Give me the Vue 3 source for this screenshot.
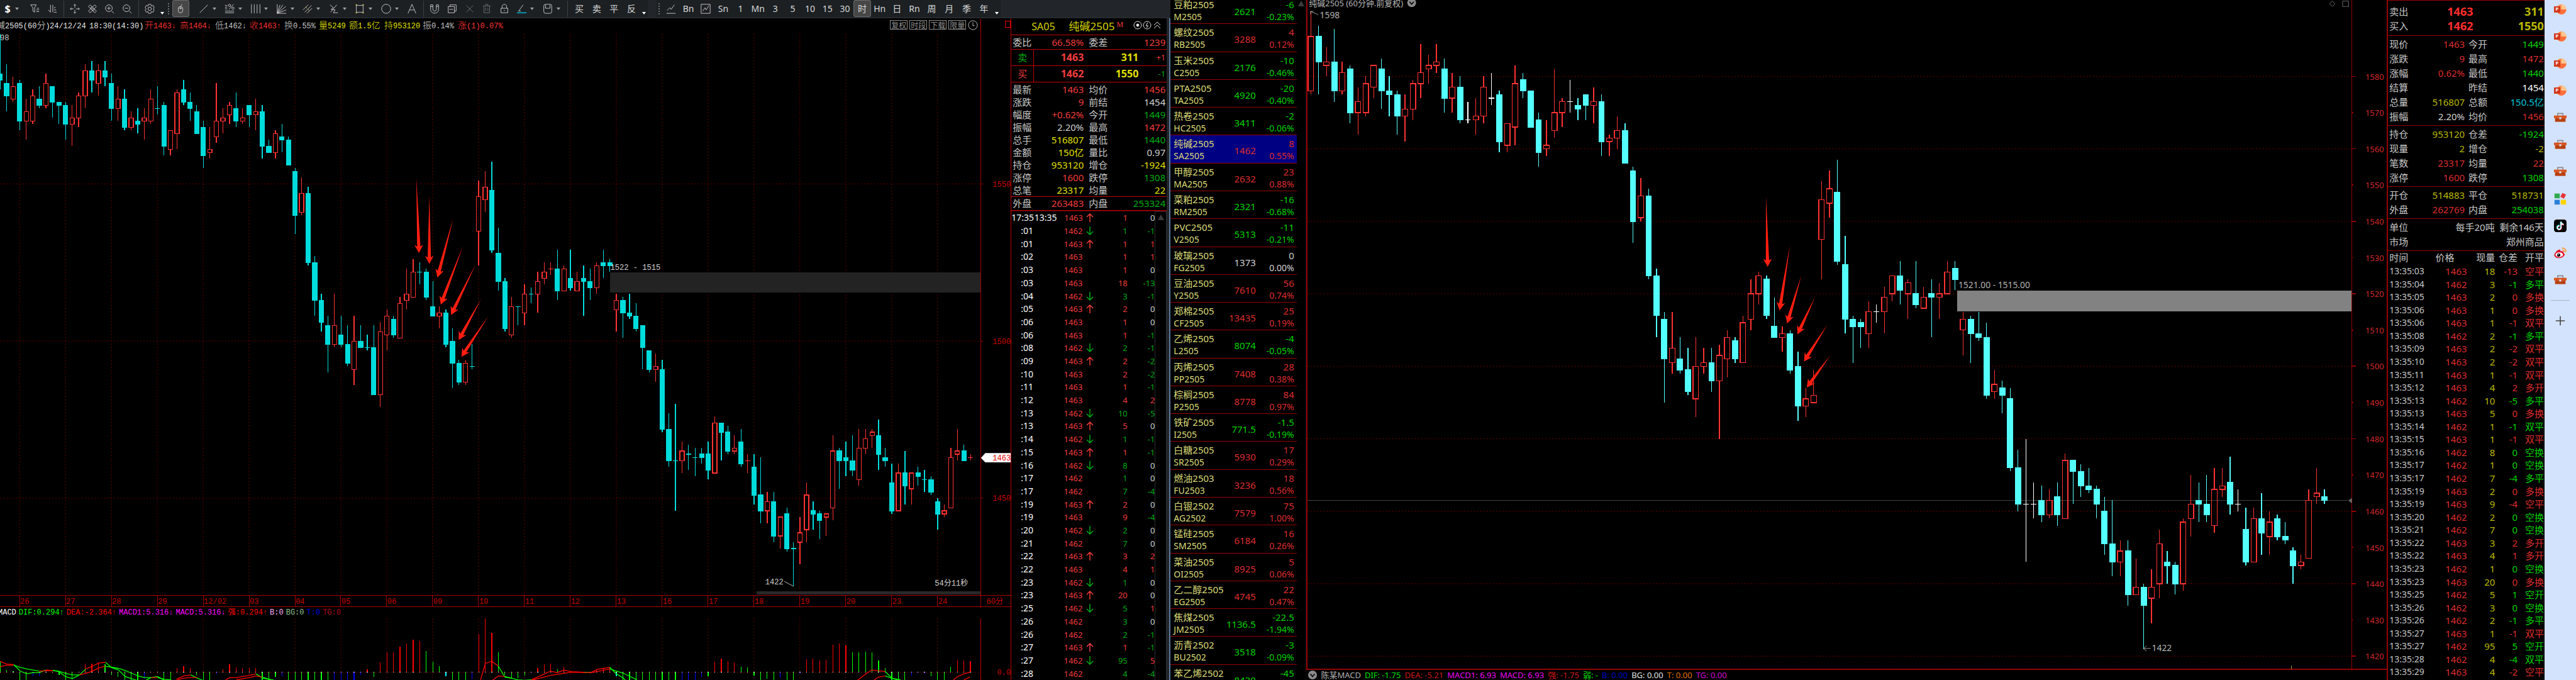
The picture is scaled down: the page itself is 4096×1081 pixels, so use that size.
<script setup>
// Candle rows: kind, then high / body top / body bottom / low as ticks below a reference price.
const parse = (src) => src.trim().split(/\s+/).map((c) => {
  const [h, t, b, l] = c.slice(1).split(',').map(Number)
  return { k: c[0], h, t, b, l }
})

const leftRaw = parse(`
d-5,8,10,13 d5,11,15,20 u9,12,16,17 d10,11,23,26 u16,20,23,29 u13,15,23,24 d12,16,18,19 u8,11,18,19 d12,12,17,22 d17,17,18,24
d17,18,24,29 u18,22,24,31 u14,15,22,25 u5,7,15,19 d4,7,10,14 u5,7,11,15 d4,7,9,12 d8,11,19,23 u12,16,19,23 d13,16,25,26
u20,22,25,26 d19,23,24,27 u19,22,23,29 u13,16,23,24 d12,19,19,21 d17,18,31,34 u26,26,32,34 u13,14,27,32 d10,13,17,18 d14,17,19,23
d18,20,27,27 d23,25,34,38 u25,32,33,35 u11,23,28,30 u19,22,23,27 u17,18,21,24 d14,19,23,25 u19,22,23,24 d18,18,21,25 u16,20,21,26
d18,20,31,35 d29,31,33,33 u26,27,33,35 d24,28,29,33 d28,29,37,37 d38,39,53,59 u41,46,52,53 d44,46,68,69 d66,68,80,85 d78,80,87,90
d85,88,94,103 u78,88,94,95 d85,91,94,95 d88,94,100,101 u85,93,102,107 d88,93,95,95 d91,95,95,96 d88,95,110,110 u87,90,110,114 u83,85,91,96
d85,86,91,92 u79,81,92,92 u70,78,80,83 u67,71,79,79 d68,71,71,75 d70,71,79,80 d74,82,85,85 u82,84,85,89 d83,84,94,95 d89,93,100,108
d99,100,106,107 u99,100,106,107 d94,101,101,102 u42,47,58,69 u39,44,48,52 d36,45,64,65 d57,65,74,77 d73,74,89,90 u79,82,91,92 d82,82,82,88
u75,78,84,88 d76,78,78,81 u71,74,78,84 u68,71,73,75 u68,70,70,72 d64,70,77,80 u69,70,77,77 d64,73,76,77 u71,74,77,77 d69,73,74,85
d70,74,76,80 u68,69,76,78 d64,68,69,73 d67,68,69,71 u78,80,83,90 d79,80,84,92 d78,84,85,86 d81,85,89,90 d88,88,95,102 d96,96,102,103
u97,101,102,106 d99,102,121,122 d116,121,131,133 d113,131,131,147 u125,128,131,135 d126,129,129,134 d127,130,130,136 d127,129,130,132 d125,129,134,137 u117,119,135,135
d119,119,122,131 d120,122,128,129 u123,127,128,129 d121,125,132,133 u129,131,131,135 d129,133,142,145 d130,142,147,151 u141,144,147,151 d141,144,155,157 u149,149,155,159
d146,148,159,160 d157,159,159,171 u149,154,157,164 u138,142,153,157 d144,147,148,153 d147,148,150,156 u148,148,149,155 u123,128,146,150 d127,128,131,140 d125,130,131,136
d123,131,134,136 u121,127,137,139 u121,124,127,129 u121,122,123,127 d118,123,129,134 d127,130,131,133 d132,138,147,148 u132,135,147,147 d128,135,139,145 u135,135,140,145
d133,135,136,139 d134,137,137,141 d136,137,141,142 d143,144,148,153 u145,147,148,149 u127,130,146,146 u121,128,129,131 d126,128,131,131 u129,130,130,131`)

const rightRaw = parse(`
u2,9,24,25 d6,9,16,25 u12,16,17,20 d7,16,24,27 u16,19,24,25 d17,18,30,33 u23,27,30,36 u20,22,30,31 u17,17,23,26 d15,18,24,29
d20,24,25,31 d24,25,31,36 u25,29,31,38 u21,22,29,32 u11,19,22,26 u14,17,18,22 u11,16,17,19 d15,18,26,30 u19,23,26,30 d20,23,32,33
w27,32,32,33 u26,31,32,36 u20,23,31,33 w19,26,26,28 d24,25,38,41 u33,33,39,41 u17,22,34,39 d19,21,24,26 d24,24,34,34 d30,32,41,45
u32,39,40,42 u18,30,35,37 u26,27,30,34 w21,27,27,30 d26,28,29,32 d25,25,28,32 u23,27,28,33 d25,27,38,42 u36,37,38,42 u31,35,37,40
d33,35,44,44 d45,46,60,66 u48,53,59,60 d51,53,75,76 d73,75,86,92 d85,87,98,110 u85,95,99,102 d92,98,101,102 d95,101,107,108 u92,100,109,114
u95,99,100,102 d95,99,104,107 u94,97,104,120 u90,92,98,103 d92,93,98,99 u86,88,99,99 u76,80,87,90 u74,75,80,83 d75,76,86,87 d81,89,92,92
u89,91,92,96 d90,91,101,102 d96,100,111,115 u106,109,111,114 u101,108,110,110 u49,54,65,76 u46,51,55,59 d43,52,71,72 d64,72,87,91 d86,87,89,99
d87,88,89,95 u82,85,91,95 w83,85,85,88 u78,81,85,91 u75,75,80,82 d71,75,79,83 u76,77,80,87 d71,80,83,84 u78,81,84,84 d76,80,81,92
u77,80,81,87 u71,74,80,80 d71,73,76,79 u85,87,90,97 d86,87,91,99 d85,91,92,93 d88,92,108,109 u101,105,107,109 d104,106,108,113 d106,109,128,129
d123,128,138,140 w120,138,138,154 w132,138,138,142 d133,137,141,143 u134,137,141,142 d132,136,141,144 u124,126,142,142 d126,126,129,138 d127,129,133,136 d128,133,134,135
d133,134,138,142 d136,140,149,152 d137,149,154,158 u148,151,154,158 d148,151,163,166 u153,161,163,163 d160,161,166,178 u156,161,164,171 u145,149,160,164 d151,154,155,160
d154,155,160,163 u142,143,160,162 u130,138,142,147 d132,137,138,143 d130,138,141,143 u128,134,144,146 u128,133,134,136 d125,132,138,141 w134,138,138,140 d139,145,154,155
u139,142,154,154 d135,142,146,152 u140,143,147,152 d141,142,147,148 d143,147,148,149 d150,151,155,160 u152,154,155,156 u134,137,153,153 u128,135,136,138 d134,136,137,138`)

const place = (rows, x0, step, y0, tick) => rows.map((c, i) => {
  const y = (n) => Math.round((y0 + n * tick) * 10) / 10
  return { k: c.k, x: Math.round((x0 + i * step) * 10) / 10, h: y(c.h), t: y(c.t), b: y(c.b), l: y(c.l), flat: c.t === c.b }
})
const leftY = (p) => 627 + (1500 - p) * 5.784
const rightY = (p) => 540.5 + (1520 - p) * 6.667
const leftCandles = place(leftRaw, 0, 12.066, leftY(1593), 5.784)
const rightCandles = place(rightRaw, 8.3, 14.46, rightY(1600), 6.667)

const dates = ['26', '27', '28', '29', '12/02', '03', '04', '05', '06', '09', '10', '11', '12', '13', '16', '17', '18', '19', '20', '23', '24']
  .map((t, i) => ({ t, x: 36 + i * 84.46 }))
const rightLabels = Array.from({ length: 17 }, (_, i) => 1580 - i * 10)

// Tapered annotation arrow from a tail point to a tip.
const arrow = ([x1, y1, x2, y2]) => {
  const len = Math.hypot(x2 - x1, y2 - y1)
  const ux = (x2 - x1) / len, uy = (y2 - y1) / len
  const p = (back, side) => `${(x2 - ux * back - uy * side).toFixed(1)},${(y2 - uy * back + ux * side).toFixed(1)}`
  return [p(len, 0), p(12, 3), p(15, 8), p(0, 0), p(15, -8), p(12, -3)].join(' ')
}
const leftArrows = [[766, 326, 771, 465], [790, 359, 790, 485], [834, 401, 805, 510], [852, 452, 811, 560], [875, 486, 830, 579], [885, 550, 844, 625], [898, 582, 849, 656]].map(arrow)
const rightArrows = [[846, 361, 849, 491], [890, 451, 871, 571], [911, 507, 885, 595], [936, 547, 904, 615], [959, 597, 916, 665], [964, 654, 921, 713]].map(arrow)

// Histogram: colour letter and signed height per candle.
const hist = `g20 g4 g2 g-15 g-15 b-8 b-7 g0 c-1 g-5 g-15 g-13 b-1 r16 r16 r18 g14 g-5 g-9 g-15 g-15 g-15 b-12 b-1 g0 g-15 g-14 r7 r11 r8
g-5 g-15 g-15 b-4 r5 r14 r9 r8 r8 r8 g-15 g-15 g-9 b-7 g-15 g-15 g-15 g-15 g-15 g-15 g-15 b-15 b-15 b-15 b-15 b-5 r5 g-9 r18 r37
r36 r47 r53 r60 r57 g39 g19 g11 c-8 g-15 g-15 g-15 b-12 r70 r100 r72 g37 g-5 g-11 g-11 g-6 b-2 r7 r14 r16 g5 r10 g-1 r0 g0
g-1 r5 r7 r10 c-8 g-15 g-15 g-15 g-15 g-15 g-15 g-15 g-15 g-15 b-15 b-15 b-15 b-9 g-8 r19 r25 r20 r18 g10 g9 g-6 g-15 g-12 g-15 b-10
g-15 g-15 b-2 r24 r25 r22 r23 r50 r53 r49 g37 g37 g38 g36 g21 g8 g-15 g-15 g-15 b-6 b-2 b-2 g-8 g-15 g-15 g10 r23 r22 r20`
  .trim().split(/\s+/).map((s, i) => ({ k: s[0], x: (i * 12.066).toFixed(1), v: Number(s.slice(1)) }))

const curves = [
  ['r', '0,1216 12,1221 25,1222'], ['g', '25,1222 37,1234 49,1239 60,1237 72,1237 84,1232'], ['r', '84,1232 97,1233'],
  ['g', '97,1233 108,1235 120,1244 133,1248 146,1241 158,1230'], ['r', '158,1230 170,1225 182,1219 194,1218'],
  ['g', '194,1218 206,1228 218,1232 230,1244 242,1248 252,1251'], ['g', '268,1251 278,1246 290,1244 302,1251'],
  ['r', '0,1226 12,1223 25,1223'], ['g', '25,1223 37,1227 49,1230 72,1234'], ['r', '72,1234 97,1233'],
  ['g', '97,1233 108,1234 120,1238 133,1241 146,1241'], ['r', '146,1241 158,1238 170,1234 182,1228 194,1225'],
  ['g', '194,1225 206,1227 218,1229 230,1233 242,1238 254,1243 266,1246 278,1246'], ['r', '278,1246 290,1246'],
  ['g', '290,1246 302,1249 314,1250'], ['r', '324,1249 338,1243 351,1241'], ['g', '351,1241 363,1247 373,1251'],
  ['r', '326,1250 338,1247 351,1246 363,1246'], ['r', '415,1250 423,1246 435,1246 447,1244 459,1242 471,1239'],
  ['g', '471,1239 483,1247 504,1251'], ['r', '435,1250 459,1246 471,1243 483,1245'], ['g', '483,1245 495,1249 504,1251'],
  ['r', '884,1251 893,1220 905,1216 917,1225'], ['g', '917,1225 929,1245 941,1247 953,1250 965,1251 978,1250'],
  ['r', '906,1251 917,1243 929,1244'], ['g', '929,1244 941,1247'],
  ['r', '978,1250 998,1241 1013,1234 1025,1237 1038,1232 1050,1235 1074,1236'], ['g', '1074,1236 1087,1237'],
  ['r', '1087,1237 1099,1231 1111,1229 1122,1227'], ['g', '1122,1227 1134,1239 1147,1247 1151,1251'],
  ['r', '978,1251 1013,1242 1038,1238 1050,1236 1087,1237 1099,1235 1122,1230'], ['g', '1122,1230 1147,1238 1172,1250'],
  ['r', '1578,1251 1592,1240 1604,1232 1629,1235'], ['g', '1629,1235 1641,1247 1653,1251'],
  ['r', '1608,1251 1616,1245 1629,1243'], ['g', '1629,1243 1641,1247 1657,1250'],
  ['r', '1754,1251 1762,1244 1774,1239 1785,1236'], ['r', '1774,1250 1785,1245'],
]
const tone = { r: '#ff0000', g: '#00ff00', b: '#0000ff', c: '#00ffff' }

// Toolbar slots carry their relative width.
const dd = { dd: 1, w: 16 }, sep = { sep: 1, w: 10 }
const ic = (icon, name, w = 32) => ({ icon, name, w })
const tools = [
  { t: '$', w: 28, bold: 1 }, { dd: 1, w: 20 }, ic('filter', '筛选'), ic('sort', '排序'), sep,
  ic('move', '移动'), ic('ruler', '测量'), ic('zin', '放大'), ic('zout', '缩小'), sep, ic('gear', '设置'), { low: 1, w: 13 }, { grip: 1, w: 12 },
  { icon: 'mouse', name: '鼠标', w: 32, on: 1 }, { w: 10 }, ic('line', '直线'), dd, ic('pct', '百分比'), dd, ic('vlines', '周期线'), dd, ic('fan', '扇形线'), dd,
  ic('par', '平行线'), dd, ic('wave', '波浪'), dd, ic('rect', '矩形'), dd, ic('circle', '圆'), dd, ic('letter', '文字'), sep,
  ic('magnet', '磁吸'), ic('copy', '复制'), { icon: 'cross', name: '关闭', w: 32, dim: 1 }, { icon: 'trash', name: '删除', w: 32, dim: 1 }, ic('lock', '锁定'), ic('pen', '画笔颜色'), dd, ic('eraser', '样式'), dd, sep,
  { t: '买', w: 32 }, { t: '卖', w: 32 }, { t: '平', w: 32 }, { t: '反', w: 32 }, { low: 1, w: 14 },
]
const periods = [
  { grip: 1, w: 11 }, ic('trend', '分时'), { t: 'Bn', w: 32 }, ic('trendbox', '走势'),
  ...['Sn', '1', 'Mn', '3', '5', '10', '15', '30', '时', 'Hn', '日', 'Rn', '周', '月', '季', '年'].map((t) => ({ t, w: 32, on: t === '时' })),
  { low: 1, w: 15 },
]
const icons = {
  filter: '<path d="M3 3H13L10 8V16L7 14V8Z M14 9H18 M13 12H18 M13 15H18"/>',
  sort: '<path d="M7 3V16L3 12 M11 16V3 M13 8H16 M13 12H17 M13 16H18"/>',
  move: '<path d="M10 2V8M10 12V18M2 10H8M12 10H18M8 4L10 2L12 4M8 16L10 18L12 16M4 8L2 10L4 12M16 8L18 10L16 12"/>',
  ruler: '<path d="M3 6L6 3L17 14L14 17Z M14 3L17 6L6 17L3 14Z M6 9L9 6 M11 14L14 11 M8 11L12 9"/>',
  zin: '<circle cx="9" cy="9" r="6"/><path d="M14 14L18 18M6 9H12M9 6V12"/>',
  zout: '<circle cx="9" cy="9" r="6"/><path d="M14 14L18 18M6 9H12"/>',
  gear: '<path d="M8 2H12L13 5L16 4L18 8L16 10L18 12L16 16L13 15L12 18H8L7 15L4 16L2 12L4 10L2 8L4 4L7 5Z"/><circle cx="10" cy="10" r="3"/>',
  mouse: '<rect x="6" y="6" width="8" height="11" rx="4"/><path d="M10 6V11M7 9H13M10 6C10 4 13 5 12 2"/>',
  line: '<path d="M3 17L17 3"/>',
  pct: '<path d="M2 4H6M2 7H6M2 10H6M2 14H18M2 17H18M17 2L9 11"/><circle cx="10" cy="4" r="2"/><circle cx="16" cy="9" r="2"/>',
  vlines: '<path d="M2 2V18M7 2V18M12 2V18M17 2V18"/>',
  fan: '<path d="M2 2V18H18M2 18L7 3M2 18L12 3M2 18L17 6M2 18L18 12"/>',
  par: '<path d="M2 12L11 3M5 16L17 4M9 18L18 9"/><path stroke="#e6e65a" d="M7 7L9 9M11 11L13 13"/>',
  wave: '<path d="M3 3L9 8L5 11L12 12L9 17L17 17M15 3L4 16"/>',
  rect: '<path d="M4 4H16V16H4Z"/><path stroke="#e6e65a" stroke-width="2" d="M3 3H5M15 3H17M3 17H5M15 17H17"/>',
  circle: '<circle cx="10" cy="10" r="8"/>',
  letter: '<path d="M3 18L10 2L17 18M6 12H14"/>',
  magnet: '<path d="M3 3H7V11C7 15 13 15 13 11V3H17V11C17 20 3 20 3 11ZM3 6H7M13 6H17"/>',
  copy: '<path d="M6 6V3H17V14H14M3 6H14V17H3ZM5 11H12"/>',
  cross: '<path d="M4 4L16 16M16 4L4 16"/>',
  trash: '<path d="M3 5H17M5 5V17H15V5M8 5V2H12V5M8 8V14M12 8V14"/>',
  lock: '<path d="M4 9H16V17H4ZM6 9V6C6 1 14 1 14 6V9M10 12V14"/>',
  pen: '<path d="M12 3L4 14H8"/><path stroke="#00a0c0" stroke-width="2" d="M1 17H18"/>',
  eraser: '<rect x="3" y="2" width="14" height="16" rx="3"/><path d="M6 3V9H14V3"/>',
  trend: '<path d="M2 18H18M3 13L8 8L10 11L16 3"/>',
  trendbox: '<path d="M2 2H18V18H2ZM5 14L9 8L11 12L16 4"/>',
}

const info = [
  ['碱', '2505(60', '分', ')', '#e8e8e8'], ['', '24/12/24', '', '', '#e8e8e8'], ['', '18:30(14:30)', '', '', '#e8e8e8'],
  ['开', '1463', '', '↓', '#ff3434'], ['高', '1464', '', '↓', '#ff3434'], ['低', '1462', '', '↓', '#c8c8c8'], ['收', '1463', '', '↑', '#ff3434'],
  ['换', '0.55%', '', '', '#c8c8c8'], ['量', '5249', '', '', '#e6e600'], ['额', '1.5', '亿', '', '#e6e600'], ['持', '953120', '', '', '#e6e600'],
  ['振', '0.14%', '', '', '#c8c8c8'], ['涨', '(1)0.07%', '', '', '#ff3434'],
]
const macdLeft = [
  ['MACD', '#ffffff'], ['DIF:0.294↑', '#00ff00'], ['DEA:-2.364↑', '#ff0000'], ['MACD1:5.316↓', '#ff00ff'], ['MACD:5.316↓', '#ff00ff'],
  ['强:0.294↑', '#ff0000'], ['B:0', '#ffb0ff'], ['BG:0', '#90c090'], ['T:0', '#0000e0'], ['TG:0', '#b40020'],
]
const macdRight = [
  ['陈某MACD', '#b0b0b0'], ['DIF: -1.75', '#00e000'], ['DEA: -5.21', '#d01818'], ['MACD1: 6.93', '#f000f0'], ['MACD: 6.93', '#f000f0'],
  ['强: -1.75', '#d01818'], ['弱: -', '#00e000'], ['B: 0.00', '#0000c8'], ['BG: 0.00', '#e0e0e0'], ['T: 0.00', '#e07000'], ['TG: 0.00', '#d000d0'],
]

const quote = [
  ['最新', '1463', 'r', '均价', '1456', 'r'], ['涨跌', '9', 'r', '前结', '1454', 'w'], ['幅度', '+0.62%', 'r', '今开', '1449', 'g'],
  ['振幅', '2.20%', 'w', '最高', '1472', 'r'], ['总手', '516807', 'y', '最低', '1440', 'g'], ['金额', '150亿', 'y', '量比', '0.97', 'w'],
  ['持仓', '953120', 'y', '增仓', '-1924', 'y'], ['涨停', '1600', 'r', '跌停', '1308', 'g'], ['总笔', '23317', 'y', '均量', '22', 'y'],
]
// time, price, direction, volume, volume tone, open-interest change
const ticks = `:01|1462|d|1|g|-1 :01|1463|u|1|r|1 :02|1463||1|r|1 :03|1463||1|r|0 :03|1463||18|r|-13 :04|1462|d|3|g|-1 :05|1463|u|2|r|0 :06|1463||1|r|0 :06|1463||1|r|-1
:08|1462|d|2|g|-1 :09|1463|u|2|r|-2 :10|1463||2|r|-2 :11|1463||1|r|-1 :12|1463||4|r|2 :13|1462|d|10|g|-5 :13|1463|u|5|r|0 :14|1462|d|1|g|-1 :15|1463|u|1|r|-1 :16|1462|d|8|g|0
:17|1462||1|g|0 :17|1462||7|g|-4 :19|1463|u|2|r|0 :19|1463||9|r|-4 :20|1462|d|2|g|0 :21|1462||7|g|0 :22|1463|u|3|r|2 :22|1463||4|r|1 :23|1462|d|1|g|0 :23|1463|u|20|r|0
:25|1462|d|5|g|1 :26|1462||3|g|0 :26|1462||2|g|-1 :27|1463|u|1|r|-1 :27|1462|d|95|g|5 :28|1462||4|g|-4`.split(/\s+/).map((s) => s.split('|'))
ticks.unshift(['17:35', '1463', 'u', '1', 'r', '0', '13:35'])
const sign = (v) => (v === '0' ? 'w' : v[0] === '-' ? 'g' : 'r')

const products = `豆粕2505|M2505|2621|-6|-0.23% 螺纹2505|RB2505|3288|4|0.12% 玉米2505|C2505|2176|-10|-0.46% PTA2505|TA2505|4920|-20|-0.40% 热卷2505|HC2505|3411|-2|-0.06%
纯碱2505|SA2505|1462|8|0.55% 甲醇2505|MA2505|2632|23|0.88% 菜粕2505|RM2505|2321|-16|-0.68% PVC2505|V2505|5313|-11|-0.21% 玻璃2505|FG2505|1373|0|0.00% 豆油2505|Y2505|7610|56|0.74%
郑棉2505|CF2505|13435|25|0.19% 乙烯2505|L2505|8074|-4|-0.05% 丙烯2505|PP2505|7408|28|0.38% 棕榈2505|P2505|8778|84|0.97% 铁矿2505|I2505|771.5|-1.5|-0.19% 白糖2505|SR2505|5930|17|0.29%
燃油2503|FU2503|3236|18|0.56% 白银2502|AG2502|7579|75|1.00% 锰硅2505|SM2505|6184|16|0.26% 菜油2505|OI2505|8925|5|0.06% 乙二醇2505|EG2505|4745|22|0.47% 焦煤2505|JM2505|1136.5|-22.5|-1.94%
沥青2502|BU2502|3518|-3|-0.09% 苯乙烯2502|EB2502|8430|-45|-0.53%`.split(/\s+/).map((s) => s.split('|'))

const blocks = [
  [['现价', '1463', 'r', '今开', '1449', 'g'], ['涨跌', '9', 'r', '最高', '1472', 'r'], ['涨幅', '0.62%', 'r', '最低', '1440', 'g'], ['结算', '', 'w', '昨结', '1454', 'h'], ['总量', '516807', 'y', '总额', '150.5亿', 'c'], ['振幅', '2.20%', 'w', '均价', '1456', 'r']],
  [['持仓', '953120', 'y', '仓差', '-1924', 'g'], ['现量', '2', 'y', '增仓', '-2', 'y'], ['笔数', '23317', 'r', '均量', '22', 'r'], ['涨停', '1600', 'r', '跌停', '1308', 'g']],
  [['开仓', '514883', 'y', '平仓', '518731', 'y'], ['外盘', '262769', 'r', '内盘', '254038', 'g']],
]
// seconds, price, volume, change, kind, tone
const deals = `03|1463|18|-13|空平|r 04|1462|3|-1|多平|g 05|1463|2|0|多换|r 06|1463|1|0|多换|r 06|1463|1|-1|双平|r 08|1462|2|-1|多平|g 09|1463|2|-2|双平|r 10|1463|2|-2|双平|r 11|1463|1|-1|双平|r 12|1463|4|2|多开|r
13|1462|10|-5|多平|g 13|1463|5|0|多换|r 14|1462|1|-1|双平|g 15|1463|1|-1|双平|r 16|1462|8|0|空换|g 17|1462|1|0|空换|g 17|1462|7|-4|多平|g 19|1463|2|0|多换|r 19|1463|9|-4|空平|r 20|1462|2|0|空换|g
21|1462|7|0|空换|g 22|1463|3|2|多开|r 22|1463|4|1|多开|r 23|1462|1|0|空换|g 23|1463|20|0|多换|r 25|1462|5|1|空开|g 26|1462|3|0|空换|g 26|1462|2|-1|多平|g 27|1463|1|-1|双平|r 27|1462|95|5|空开|g
28|1462|4|-4|双平|g 29|1463|4|-2|空平|r`.split(/\s+/).map((s) => s.split('|'))

const rail = ['ppt', 'ppt', 'ppt', 'ppt', 'box', 'box', 'box', 'tiles', 'note', 'eye', 'box']
</script>

<template>
  <main class="desk">
    <section class="terminal">
      <nav class="toolbar" aria-label="工具栏">
        <div v-for="(group, gi) in [tools, periods]" :key="gi" class="group" :class="gi ? 'g-periods' : 'g-tools'">
          <template v-for="(s, i) in group" :key="i">
            <button v-if="s.t || s.icon" type="button" class="slot" :class="{ on: s.on, dim: s.dim, strong: s.bold }" :style="{ flexGrow: s.w }" :aria-label="s.name || s.t">
              <template v-if="s.t">{{ s.t }}</template>
              <svg v-else viewBox="0 0 20 20" class="glyph" v-html="icons[s.icon]"></svg>
            </button>
            <span v-else class="slot" :class="{ dd: s.dd, sep: s.sep, low: s.low, grip: s.grip }" :style="{ flexGrow: s.w }"><i></i></span>
          </template>
        </div>
      </nav>

      <div class="terminal-body">
        <div class="left-chart">
          <header class="info">
            <p v-for="(s, i) in info" :key="i" :style="{ color: s[4] }"><b>{{ s[0] }}</b>{{ s[1] }}<b>{{ s[2] }}</b>{{ s[3] }}</p>
            <div class="chips">
              <button v-for="c in ['复权', '时段', '下载', '限量']" :key="c" type="button">{{ c }}</button>
              <svg viewBox="0 0 18 18" class="clock"><circle cx="9" cy="9" r="8" /><path d="M9 4V10H12" /></svg>
            </div>
            <div class="corner"><span></span></div>
          </header>

          <svg class="plot song" viewBox="0 62 1860 1055">
            <g class="dots">
              <path v-for="d in dates" :key="d.x" :d="`M${d.x} 62V1094`" />
              <path v-for="p in [1550, 1500, 1450]" :key="p" :d="`M0 ${leftY(p)}H1804`" />
            </g>
            <text x="0" y="74" fill="#c8c8c8">98</text>
            <g shape-rendering="crispEdges">
              <rect x="1122" y="501" width="682" height="37" fill="#232323" />
              <rect x="1392" y="1087" width="412" height="6" fill="#282828" />
              <g v-for="c in leftCandles" :key="c.x" :class="['candle', c.k]">
                <path :d="`M${c.x} ${c.h}V${c.t}M${c.x} ${c.b}V${c.l}`" />
                <path v-if="c.flat" :d="`M${c.x - 4.6} ${c.t}h9.2`" />
                <rect v-else :x="c.x - 4" :y="c.t" width="8" :height="c.b - c.t" />
              </g>
              <path class="rule" d="M1805 62V1117M0 1094.5H1860M0 1115.5H1860M1805 627h4M1805 916h4M1805 338h4" />
              <path v-for="d in dates" :key="d.t" class="rule" :d="`M${d.x} 1094v22`" />
            </g>
            <g fill="#c80000">
              <text v-for="d in dates" :key="d.t" :x="d.x + 1" y="1110">{{ d.t }}</text>
              <text v-for="p in [1550, 1500, 1450]" :key="p" x="1860" :y="leftY(p) + 5" text-anchor="end">{{ p }}</text>
              <text x="1815" y="1110">60分</text>
            </g>
            <path d="M1805 842L1813 833H1860V850H1813Z" fill="#fff" />
            <text x="1860" y="847" text-anchor="end" fill="#e00000">1463</text>
            <g fill="#d0d0d0">
              <text x="1123" y="496">1522 - 1515</text>
              <text x="1408" y="1075">1422</text>
              <text x="1720" y="1077">54分11秒</text>
            </g>
            <path d="M1443 1069L1460 1078" stroke="#d0d0d0" />
            <polygon v-for="a in leftArrows" :key="a" :points="a" fill="#ff1e10" />
          </svg>

          <p class="macd"><span v-for="m in macdLeft" :key="m[0]" :style="{ color: m[1] }">{{ m[0] }}</span></p>

          <svg class="plot song" viewBox="0 1137 1860 114">
            <g class="dots">
              <path v-for="d in dates" :key="d.x" :d="`M${d.x} 1137V1251`" />
              <path d="M0 1236.5H1804" />
            </g>
            <g shape-rendering="crispEdges" class="bars">
              <path v-for="b in hist" :key="b.x" :d="`M${b.x} 1236V${1236 - b.v}`" :stroke="tone[b.k]" />
              <path v-for="b in hist" :key="'t' + b.x" :d="`M${b.x} 1235v2`" stroke="#fff" />
              <path class="rule" d="M1805 1137V1251" />
            </g>
            <polyline v-for="(c, i) in curves" :key="i" :points="c[1]" :stroke="tone[c[0]]" class="curve" />
            <text x="1860" y="1241" text-anchor="end" fill="#c80000">0.0</text>
          </svg>
        </div>

        <aside class="quote">
          <header class="q-title">
            <span>SA05</span><strong>纯碱2505</strong><sup>M</sup>
            <svg viewBox="0 0 44 14"><circle cx="7" cy="7" r="6" /><circle cx="7" cy="7" r="2" class="fill" /><circle cx="22" cy="7" r="6" /><path d="M23 3L20 8H24L21 11M33 7L38 2L43 7M33 12L38 7L43 12" /></svg>
          </header>
          <div class="q-row q-ratio"><span>委比</span><span class="r">66.58%</span><span>委差</span><span class="r">1239</span></div>
          <div class="q-level"><span class="g">卖</span><strong class="r">1463</strong><strong class="y">311</strong><span class="r small">+1</span></div>
          <div class="q-level"><span class="r">买</span><strong class="r">1462</strong><strong class="y">1550</strong><span class="g small">-1</span></div>
          <div class="q-stats">
            <div v-for="q in quote" :key="q[0]" class="q-row"><span>{{ q[0] }}</span><span :class="q[2]">{{ q[1] }}</span><span>{{ q[3] }}</span><span :class="q[5]">{{ q[4] }}</span></div>
          </div>
          <div class="q-row q-disk"><span>外盘</span><span class="r">263483</span><span>内盘</span><span class="g">253324</span></div>
          <div class="q-ticks">
            <table>
              <tbody>
                <tr v-for="(t, i) in ticks" :key="i">
                  <td class="h">{{ t[0] }}</td><td class="h">{{ t[6] }}</td><td class="r">{{ t[1] }}</td>
                  <td class="dir" :class="t[2] === 'u' ? 'r' : 'g'"><svg v-if="t[2]" viewBox="0 0 12 14"><path :d="t[2] === 'u' ? 'M6 14V1M1 6L6 1L11 6' : 'M6 0V13M1 8L6 13L11 8'" /></svg></td>
                  <td :class="t[4]">{{ t[3] }}</td><td :class="sign(t[5])">{{ t[5] }}</td>
                </tr>
              </tbody>
            </table>
            <div class="track"><i></i></div>
          </div>
        </aside>
        <div class="gutter"></div>
      </div>
    </section>

    <section class="watch">
      <table>
        <tbody>
          <tr v-for="p in products" :key="p[1]" :class="{ picked: p[1] === 'SA2505' }">
            <th scope="row"><span>{{ p[0] }}</span><small>{{ p[1] }}</small></th>
            <td :class="sign(p[3])">{{ p[2] }}</td>
            <td :class="sign(p[3])"><span>{{ p[3] }}</span><small>{{ p[4] }}</small></td>
          </tr>
        </tbody>
      </table>
      <div class="track"><i></i></div>
    </section>

    <section class="right-chart">
      <svg class="plot sans" viewBox="0 0 1988 1232">
        <g class="dots">
          <path v-for="p in [1580, 1560, 1540, 1520, 1500, 1480, 1460, 1440, 1420]" :key="p" :d="`M2 ${rightY(p)}H1924`" />
        </g>
        <g shape-rendering="crispEdges">
          <path d="M0 921H1924" stroke="#4a4a4a" />
          <rect x="1198" y="535" width="726" height="38" fill="#828282" />
          <g v-for="c in rightCandles" :key="c.x" :class="['candle', 'wide', c.k]">
            <path :d="`M${c.x} ${c.h}V${c.t}M${c.x} ${c.b}V${c.l}`" />
            <path v-if="c.flat" :d="`M${c.x - 5} ${c.t}h10`" />
            <rect v-else :x="c.x - 5" :y="c.t" width="10" :height="c.b - c.t" />
          </g>
          <path class="rule dark" d="M1 0V1232M1924 0V1232M0 1231H1988" />
          <path v-for="p in rightLabels" :key="p" class="rule dark" :d="`M1924 ${rightY(p)}h${p % 20 ? 3 : 7}`" />
          <path d="M1813 1224v7" stroke="#b4b43c" />
        </g>
        <path d="M1924 916V926L1918 921Z" fill="#6e6e6e" />
        <g fill="#d22828" class="scale">
          <text v-for="p in rightLabels" :key="p" x="1983" :y="rightY(p) + 6" text-anchor="end">{{ p }}</text>
        </g>
        <g fill="#b4b4b4">
          <text x="5" y="11" class="caption">纯碱2505 (60分钟.前复权)</text>
          <text x="25" y="34">1598</text>
          <text x="1200" y="530">1521.00 - 1515.00</text>
          <text x="1556" y="1198">1422</text>
        </g>
        <path d="M8 26V21H13M8 21L22 27M1541 1193H1554M1546 1188L1541 1193L1546 1198" stroke="#b4b4b4" fill="none" />
        <circle cx="194" cy="5" r="8" fill="#8c8c8c" /><path d="M190 3L194 8L198 3" stroke="#111" stroke-width="2" fill="none" />
        <path d="M1888 2L1893 7L1888 12L1883 7ZM1907 2H1918V12H1907Z" stroke="#787878" fill="none" />
        <polygon v-for="a in rightArrows" :key="a" :points="a" fill="#ff1e10" />
      </svg>
      <p class="macd-right">
        <svg viewBox="0 0 16 16"><circle cx="8" cy="8" r="8" fill="#8c8c8c" /><path d="M4 6L8 11L12 6" stroke="#111" stroke-width="2" fill="none" /></svg>
        <span v-for="m in macdRight" :key="m[0]" :style="{ color: m[1] }">{{ m[0] }}</span>
      </p>
    </section>

    <aside class="panel">
      <div class="p-top">
        <div><span>卖出</span><strong class="r">1463</strong><strong class="y">311</strong></div>
        <div><span>买入</span><strong class="r">1462</strong><strong class="y">1550</strong></div>
      </div>
      <div v-for="(b, i) in blocks" :key="i" class="p-block">
        <div v-for="q in b" :key="q[0]" class="p-row">
          <p><span>{{ q[0] }}</span><span :class="q[2]">{{ q[1] }}</span></p>
          <p><span>{{ q[3] }}</span><span :class="q[5]">{{ q[4] }}</span></p>
        </div>
      </div>
      <div class="p-block">
        <p class="p-wide"><span>单位</span><span>每手20吨&ensp;剩余146天</span></p>
        <p class="p-wide"><span>市场</span><span>郑州商品</span></p>
      </div>
      <table class="deals">
        <thead><tr><th>时间</th><th>价格</th><th>现量</th><th>仓差</th><th>开平</th></tr></thead>
        <tbody>
          <tr v-for="(d, i) in deals" :key="i">
            <td>13:35:{{ d[0] }}</td><td class="r">{{ d[1] }}</td><td class="y">{{ d[2] }}</td><td :class="d[5]">{{ d[3] }}</td><td :class="d[5]">{{ d[4] }}</td>
          </tr>
        </tbody>
      </table>
    </aside>

    <nav class="rail" aria-label="侧边栏">
      <button v-for="(r, i) in rail" :key="i" type="button" :aria-label="r">
        <svg v-if="r === 'ppt'" viewBox="0 0 24 20">
          <circle cx="14" cy="10" r="9.5" fill="#ff8a4c" /><path d="M14 .5A9.5 9.5 0 0 1 23.5 10H14Z" fill="#ffc78f" /><path d="M4.5 10H23.5A9.5 9.5 0 0 1 4.5 10Z" fill="#ff6f3a" />
          <rect x="0" y="4" width="12" height="12" rx="1" fill="#d2381c" /><text x="3" y="13" font-size="9" font-weight="700" fill="#fff">P</text>
        </svg>
        <svg v-else-if="r === 'box'" viewBox="0 0 24 20">
          <path d="M7 6V2H17V6" fill="none" stroke="#8c8c8c" stroke-width="2" /><path d="M0 6H24V11H0Z" fill="#d9531e" /><path d="M2 11H22V18H2Z" fill="#b8400f" /><rect x="10" y="9" width="4" height="4" fill="#d8d8d8" />
        </svg>
        <svg v-else-if="r === 'tiles'" viewBox="0 0 24 24">
          <rect x="1" y="2" width="10" height="9" fill="#2fa84f" /><path d="M16 1L23 4L19 12L12 8Z" fill="#e8343a" /><rect x="1" y="14" width="10" height="9" fill="#2b7fd4" /><rect x="13" y="14" width="10" height="9" fill="#ffd400" />
        </svg>
        <svg v-else-if="r === 'note'" viewBox="0 0 24 24">
          <rect width="24" height="24" rx="5" fill="#000" /><path d="M13 4V15A3.5 3.5 0 1 1 10 11.5M13 5C14 8 16 9 18 9" fill="none" stroke="#25f4ee" stroke-width="3" /><path d="M14 5V16A3.5 3.5 0 1 1 11 12.5M14 6C15 9 17 10 19 10" fill="none" stroke="#fe2c55" stroke-width="2" /><path d="M13.5 4.5V15.5A3.5 3.5 0 1 1 10.5 12M13.5 5.5C14.5 8.5 16.5 9.5 18.5 9.5" fill="none" stroke="#fff" stroke-width="2" />
        </svg>
        <svg v-else viewBox="0 0 24 20">
          <path d="M9 4C12 3 13 5 12 7C16 6 19 7 18 10C24 13 17 20 10 20C3 20 -1 16 1 12C3 8 6 5 9 4Z" fill="#e6162d" /><ellipse cx="10" cy="13.5" rx="7" ry="4.5" fill="#fff" /><circle cx="9" cy="14" r="3.2" fill="#111" /><circle cx="8" cy="13" r="1" fill="#fff" />
          <path d="M15 1C20 0 24 4 22 9M16 5C18 4 20 6 19 8" fill="none" stroke="#ff9933" stroke-width="2" />
        </svg>
      </button>
      <hr>
      <button type="button" class="add" aria-label="添加"><svg viewBox="0 0 20 20"><path d="M10 1V19M1 10H19" /></svg></button>
    </nav>
  </main>
</template>

<style>
body { margin: 0; background: #000; overflow: hidden; }
</style>

<style scoped>
.desk {
  display: grid;
  grid-template-columns: 2154fr 250fr 1988fr 290fr 58fr;
  height: 100vh;
  overflow: hidden;
  background: #000;
  color: #c8c8c8;
  font: 15px/20px "Noto Sans", "Noto Sans CJK SC", sans-serif;
}
.desk > * { min-width: 0; min-height: 0; }
p { margin: 0; }
button { border: 0; padding: 0; background: none; color: inherit; font: inherit; }
table { border-collapse: collapse; border-spacing: 0; }
th, td { padding: 0; font-weight: 400; text-align: right; }
.r { color: #f03c3c; }
.g { color: #00aa14; }
.y { color: #e1e100; }
.w { color: #d2d2d2; }
.h { color: #fff; }
.c { color: #00c8dc; }

/* left terminal */
.terminal { display: flex; flex-direction: column; }
.toolbar { display: flex; height: 28px; flex: none; background: #22262a; border-bottom: 1px solid #2c3034; }
.group { display: flex; background: #1c2023; height: 27px; min-width: 0; }
.g-tools { flex: 1192 1 0; }
.g-periods { flex: 634 1 0; margin-left: 14px; margin-right: 270px; }
.slot { flex: 1 1 0; min-width: 0; display: flex; align-items: center; justify-content: center; color: #d8d8d8; font-size: 14px; line-height: 26px; white-space: nowrap; }
.strong { font-weight: 700; color: #fff; font-size: 16px; }
.glyph { width: 18px; height: 18px; flex: none; fill: none; stroke: #d0d0d0; stroke-width: 1; }
.on { background: #474747; box-shadow: inset 0 0 0 1px #6a6a6a; border-radius: 4px; }
.dim { opacity: .45; }
.dd { justify-content: flex-start; }
.dd i { border: 3px solid transparent; border-top: 4px solid #a0a0a0; border-bottom: 0; }
.low { align-items: flex-end; }
.low i { margin-bottom: 4px; border: 3px solid transparent; border-top: 4px solid #fff; border-bottom: 0; }
.sep i { width: 1px; height: 26px; background: #3c4044; }
.grip i { width: 0; height: 18px; border-left: 2px dotted #6a6e72; }

.terminal-body { flex: 1; min-height: 0; display: grid; grid-template-columns: 1860fr 287fr 7fr; }
.left-chart { min-width: 0; overflow: hidden; }
.info { display: grid; grid-template-columns: 79px 63px 88px 56px 56px 55px 55px 55px 48px 56px 61px 56px 1fr auto 48px; height: 25px; align-items: start; font: 12px/20px "Liberation Mono", "Noto Sans CJK SC", monospace; white-space: nowrap; }
.info b { font: 300 14px/20px "Noto Sans CJK SC", sans-serif; }
.info p:first-child { margin-left: -6px; }
.chips { display: flex; gap: 3px; margin: 3px 4px 0 0; }
.chips button { border: 1px solid #8c8c8c; width: 28px; height: 15px; font: 12px/13px "Noto Sans CJK SC", sans-serif; color: #8c8c8c; }
.clock { width: 16px; height: 16px; fill: none; stroke: #d0d0d0; stroke-width: 1; }
.corner { align-self: stretch; margin-top: 1px; border-left: 1px solid #c00000; display: flex; justify-content: flex-end; }
.corner span { margin-top: 3px; width: 7px; height: 9px; border: 1px solid #f00000; }
.plot { display: block; width: 100%; height: auto; }
.song { font: 14px "Liberation Mono", "Noto Sans CJK SC", monospace; }
.sans { font-size: 16px; }
.caption, .scale { font-size: 15px; }
.dots path { stroke: #8c0000; stroke-width: 1; stroke-dasharray: 2 4; fill: none; }
.rule { stroke: #be0000; stroke-width: 1; fill: none; }
.rule.dark { stroke: #960000; stroke-width: 2; }
.bars path { stroke-width: 1.4; }
.curve { fill: none; stroke-width: 1.5; }
.candle path, .candle rect { stroke-width: 1.5; }
.d path, .d rect { stroke: #00dcdc; fill: #00dcdc; }
.u path, .u rect { stroke: #ff3232; fill: none; }
.wide.d path, .wide.d rect { stroke: #54ffff; fill: #54ffff; }
.w path { stroke: #fff; }
.macd { display: flex; gap: 4px; height: 17px; font: 12px/17px "Liberation Mono", "Noto Sans CJK SC", monospace; white-space: nowrap; }
.macd span:first-child { margin-left: -3px; }

.quote { min-width: 0; display: flex; flex-direction: column; border-left: 1px solid #be0000; box-sizing: border-box; overflow: hidden; }
.quote > * { flex: none; box-sizing: border-box; border-bottom: 1px solid #be0000; }
.q-title { display: flex; height: 27px; align-items: center; color: #d2d200; font-size: 16px; padding: 0 9px 0 32px; }
.q-title strong { font-weight: 400; font-size: 17px; margin-left: 22px; }
.q-title sup { color: #f03c3c; font: 12px/12px "Liberation Serif", serif; margin: -6px auto 0 3px; }
.q-title svg { width: 44px; height: 14px; fill: none; stroke: #e0e0e0; stroke-width: 1; margin-top: -4px; }
.q-title .fill { fill: #fff; }
.q-row { display: grid; grid-template-columns: 34fr 79fr 8fr 36fr 86fr; grid-template-areas: "a b . c d"; padding: 0 2px; line-height: 20px; height: 20px; white-space: nowrap; }
.q-row span:nth-child(1) { grid-area: a; }
.q-row span:nth-child(2) { grid-area: b; text-align: right; }
.q-row span:nth-child(3) { grid-area: c; }
.q-row span:nth-child(4) { grid-area: d; text-align: right; }
.q-ratio { height: 23px; line-height: 22px; }
.q-level { display: grid; grid-template-columns: 36fr 79fr 87fr 43fr; height: 26px; line-height: 25px; text-align: right; padding-right: 2px; }
.q-level span:first-child { text-align: center; border-right: 1px solid #be0000; }
.q-level strong { font-size: 16px; }
.small { font-size: 13px; }
.q-stats { height: 182px; padding-top: 1px; }
.q-disk { height: 22px; line-height: 21px; }
.quote .q-ticks { flex: 1; min-height: 0; display: flex; border: 0; border-top: 1px dotted #be0000; }
.q-ticks table { flex: 230; display: block; height: 100%; font-size: 13px; }
.q-ticks tbody, .watch tbody { display: grid; grid-auto-rows: 1fr; height: 100%; }
.q-ticks tr { display: grid; grid-template-columns: 35fr 37fr 42fr 23fr 49fr 44fr; align-items: center; line-height: 18px; min-height: 0; }
.q-ticks td:nth-child(-n+2) { font-size: 14px; }
.q-ticks .dir { display: flex; justify-content: center; }
.dir svg { width: 12px; height: 14px; fill: none; stroke: currentColor; stroke-width: 1.5; }
.track { flex: 17; border: 1px solid #2a2e30; border-bottom: 0; box-sizing: border-box; display: flex; justify-content: center; }
.track i { margin-top: 4px; height: 0; border: 5px solid transparent; border-bottom: 9px solid #3c3c3c; border-top: 0; }
.gutter { background: #22262a; border-right: 2px solid #5a789b; }

/* watch list */
.watch { display: flex; overflow: hidden; height: 100vh; }
.watch table { flex: 233; display: block; margin-top: -6px; height: calc(100% + 26px); }
.watch tr { display: grid; grid-template-columns: 87fr 50fr 64fr; border-bottom: 1px solid #960000; padding: 3px 4px 0 5px; min-height: 0; white-space: nowrap; }
.watch th { text-align: left; color: #dcdc78; }
.watch span, .watch small { display: block; font-size: 15px; line-height: 20px; }
.watch small { font-size: 14px; line-height: 19px; }
.watch td:nth-child(2) { line-height: 42px; }
.watch .r { color: #dc2d2d; }
.watch .g { color: #00d200; }
.watch .picked { background: #000082; }
.watch .track { border: 0; border-right: 1px solid #141414; }
.watch .track i { margin-top: 1px; }

/* right chart */
.right-chart { overflow: hidden; }
.macd-right { display: flex; gap: 6px; align-items: center; padding-left: 3px; font-size: 13px; line-height: 17px; white-space: nowrap; }
.macd-right svg { width: 14px; height: 14px; }

/* detail panel */
.panel { display: flex; flex-direction: column; overflow: hidden; border-left: 2px solid #960000; border-top: 1px solid #960000; box-sizing: border-box; white-space: nowrap; height: 100vh; }
.panel .g { color: #00d200; }
.panel .r { color: #dc2d2d; }
.panel .y { color: #b9b900; }
.p-top { height: 56px; box-sizing: border-box; padding: 6px 1px 0 2px; border-bottom: 1px solid #960000; }
.p-top div { display: grid; grid-template-columns: 34fr 100fr 113fr; line-height: 23px; text-align: right; }
.p-top span { text-align: left; }
.p-top strong { font-size: 18px; }
.p-top strong.r { color: #ff2d2d; }
.p-block { border-bottom: 1px solid #960000; padding: 2px 1px 2px 2px; }
.p-row { display: grid; grid-template-columns: 1fr 1fr; gap: 6px; }
.p-row p, .p-wide { display: flex; justify-content: space-between; line-height: 23px; }
.deals { flex: 1; min-height: 0; display: flex; flex-direction: column; padding-bottom: 2px; }
.deals tr { display: grid; grid-template-columns: 58fr 66fr 45fr 36fr 43fr; padding-left: 2px; line-height: 20px; min-height: 0; }
.deals thead { display: block; height: 22px; }
.deals th:nth-child(2) { padding-right: 20px; }
.deals td:first-child, .deals th:first-child { text-align: left; }
.deals td:first-child { font-size: 14px; }
.deals td:last-child, .deals th:last-child { text-align: left; padding-left: 12px; }
.deals tbody { flex: 1; min-height: 0; display: grid; grid-auto-rows: 1fr; }

/* browser rail */
.rail { background: #d3e3fd; display: flex; flex-direction: column; align-items: center; }
.rail button { display: flex; align-items: center; justify-content: center; width: 100%; height: 43px; flex: none; }
.rail button:first-child { height: 36px; padding-bottom: 7px; box-sizing: border-box; }
.rail svg { width: 20px; height: 20px; }
.rail hr { width: 60%; height: 1px; border: 0; background: #aab4c4; margin: 11px 0 10px; }
.rail .add svg { width: 16px; height: 16px; fill: none; stroke: #444; stroke-width: 2; }
</style>
